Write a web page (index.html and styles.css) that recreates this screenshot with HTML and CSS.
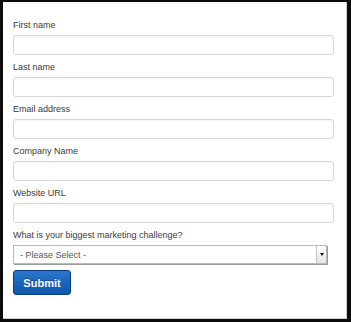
FILE: index.html
```html
<!DOCTYPE html>
<html lang="en">
<head>
  <meta charset="UTF-8" />
  <meta name="viewport" content="width=device-width, initial-scale=1.0"/>
  <title>Contact form</title>
  <link rel="stylesheet" href="styles.css">
</head>
<body>
  <form class="panel">
    <div class="field">
      <label for="first">First name</label>
      <input id="first" type="text">
    </div>
    <div class="field">
      <label for="last">Last name</label>
      <input id="last" type="text">
    </div>
    <div class="field">
      <label for="email">Email address</label>
      <input id="email" type="email">
    </div>
    <div class="field">
      <label for="company">Company Name</label>
      <input id="company" type="text">
    </div>
    <div class="field">
      <label for="website">Website URL</label>
      <input id="website" type="text">
    </div>
    <div class="field">
      <label for="challenge">What is your biggest marketing challenge?</label>
      <div class="select-wrap">
        <select id="challenge">
          <option>- Please Select -</option>
        </select>
        <span class="select-arrow"><span class="caret"></span></span>
      </div>
    </div>
    <button type="button" class="submit">Submit</button>
  </form>
</body>
</html>
```

FILE: styles.css
```css
html, body {
  height: 100%;
}
body {
  margin: 0;
  box-sizing: border-box;
  background-color: #0c0c0c;
  padding: 2px 4px 3px 3px;
  font-family: "Liberation Sans", Arial, sans-serif;
}
.panel {
  box-sizing: border-box;
  height: 100%;
  background-color: #fff;
  border-right: 1px solid #cfcfcf;
  border-bottom: 1px solid #cfcfcf;
  padding: 17px 0 0 10px;
}
.field {
  margin-bottom: 6px;
}
.field label {
  display: block;
  font-size: 9px;
  line-height: 12px;
  color: #3a3a3a;
  margin-bottom: 4px;
}
.field input {
  display: block;
  box-sizing: border-box;
  width: 321px;
  height: 20px;
  margin: 0;
  border: 1px solid #d6d6d6;
  border-radius: 3px;
  box-shadow: inset 0 1px 2px rgba(0, 0, 0, 0.05);
  background: #fff;
}
.select-wrap {
  position: relative;
  width: 314px;
  height: 19px;
  box-shadow: 1px 1px 0 #9a9a9a;
}
.select-wrap select {
  -webkit-appearance: none;
  appearance: none;
  display: block;
  box-sizing: border-box;
  width: 100%;
  height: 100%;
  margin: 0;
  border: 1px solid #b9b9b9;
  border-radius: 0;
  background: #fff;
  padding: 0 0 0 6px;
  font-family: "Liberation Sans", Arial, sans-serif;
  font-size: 9px;
  color: #555;
}
.select-arrow {
  position: absolute;
  top: 1px;
  right: 1px;
  bottom: 1px;
  width: 9px;
  border-left: 1px solid #c4c4c4;
  background: linear-gradient(#ffffff, #e6e6e6);
  display: flex;
  align-items: center;
  justify-content: center;
}
.caret {
  width: 0;
  height: 0;
  border-left: 2px solid transparent;
  border-right: 2px solid transparent;
  border-top: 3px solid #111;
}
.submit {
  display: block;
  margin-top: 6px;
  box-sizing: border-box;
  width: 58px;
  height: 25px;
  padding: 0;
  border: 1px solid #0b3d7e;
  border-radius: 3px;
  background: linear-gradient(#2a76cc, #0c56ab);
  color: #fff;
  font-family: "Liberation Sans", Arial, sans-serif;
  font-size: 11px;
  font-weight: bold;
  text-shadow: 0 -1px 0 rgba(0, 0, 0, 0.3);
}
```
